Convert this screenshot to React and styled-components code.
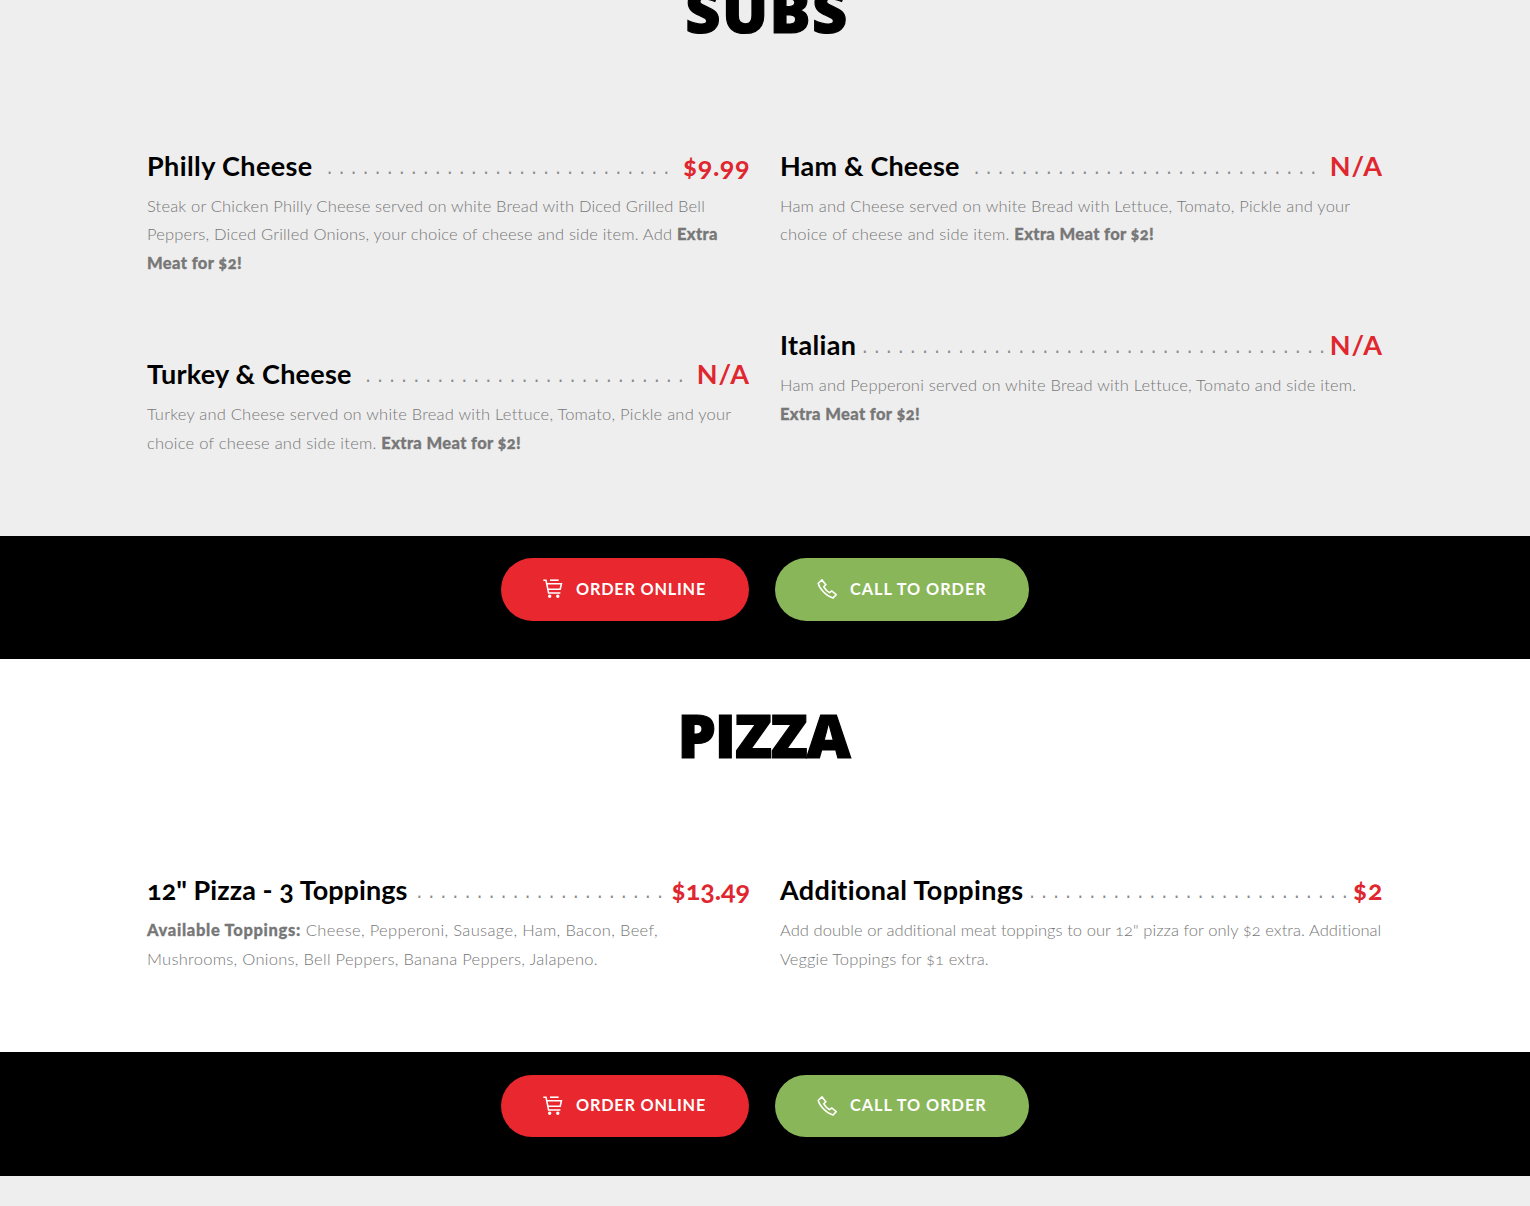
import React from 'react';
import styled, {createGlobalStyle} from "styled-components";


const GlobalStyle = createGlobalStyle`
  * {
    box-sizing: border-box;
  }
  body {
    margin: 0;
    background: #eeeeee;
    font-family: "Lato", "Open Sans", sans-serif;
    font-feature-settings: "onum";
    font-variant-ligatures: none;
  }
`;

const Page = styled.main`
  height: 1206px;
  overflow: hidden;
`;

const Section = styled.section`
  height: ${props => props.$height}px;
  margin-top: ${props => props.$offset || 0}px;
  background: ${props => props.$grey ? '#eeeeee' : '#ffffff'};
`;

const SectionTitle = styled.h2`
  margin: 0;
  padding-top: 35.6px;
  padding-left: ${props => props.$shift || 0}px;
  padding-right: 3px;
  height: 212px;
  text-align: center;
  font-family: "Open Sans", sans-serif;
  font-size: 61px;
  font-weight: 800;
  line-height: 80px;
  letter-spacing: ${props => props.$spacing}px;
  color: #000000;
  -webkit-text-stroke: 1.2px #000000;
`;

const Columns = styled.div`
  display: grid;
  grid-template-columns: 603px 603px;
  column-gap: 30px;
  justify-content: center;
`;

const Item = styled.article`
  margin-bottom: 77px;
`;

const ItemHead = styled.header`
  display: flex;
  height: 36px;
  margin-bottom: 9px;
  font-size: 27px;
  font-weight: 700;
  line-height: 37px;
  white-space: nowrap;
`;

const ItemName = styled.h3`
  margin: 0;
  font-size: inherit;
  letter-spacing: ${props => props.$spacing}px;
  color: #000000;
`;

const Dots = styled.span`
  flex: 1;
  display: flex;
  justify-content: center;
  padding-left: 3px;
  font-family: "Liberation Mono", monospace;
  font-size: 16px;
  font-weight: 400;
  line-height: 46px;
  letter-spacing: 2.43px;
  color: #8a8a8a;
`;

const Price = styled.span`
  letter-spacing: ${props => props.$spacing}px;
  color: #e0262f;
`;

const Description = styled.p`
  margin: 0 0 0.4px;
  font-size: 16.5px;
  font-weight: 300;
  line-height: 28.8px;
  color: #777777;
  white-space: nowrap;
`;

const Line = styled.span`
  display: block;
`;

const Text = styled.span`
  letter-spacing: ${props => props.$spacing}px;
`;

const Strong = styled.strong`
  font-weight: 900;
  letter-spacing: ${props => props.$spacing}px;
  -webkit-text-stroke: 0.3px #777777;
`;

const OrderBar = styled.div`
  display: flex;
  justify-content: center;
  gap: 26px;
  height: 123.4px;
  padding-top: 22.4px;
  background: #000000;
`;

const OrderButton = styled.a`
  display: flex;
  align-items: center;
  width: ${props => props.$width}px;
  height: 62.4px;
  padding: 0 0 0 42px;
  border-radius: 32px;
  background: ${props => props.$color};
  color: #ffffff;
  font-size: 16.3px;
  font-weight: 700;
  line-height: 20px;
  letter-spacing: ${props => props.$spacing}px;
  white-space: nowrap;
  cursor: pointer;
`;

const ButtonIcon = styled.svg`
  flex: none;
  width: 20px;
  height: 20px;
  margin-right: 13px;
  fill: none;
  stroke: #ffffff;
  stroke-width: 1.6;
`;

const ButtonLabel = styled.span`
  padding-bottom: 1px;
`;


const subsLeft = [
    {
        name: 'Philly Cheese', spacing: 0.39, dots: 29, price: '$9.99', priceSpacing: 0.5,
        lines: [
            [{text: 'Steak or Chicken Philly Cheese served on white Bread with Diced Grilled Bell', spacing: 0.174}],
            [{text: 'Peppers, Diced Grilled Onions, your choice of cheese and side item. Add ', spacing: 0.19},
                {text: 'Extra', spacing: 0.4, bold: true}],
            [{text: 'Meat for $2!', spacing: 0.39, bold: true}],
        ],
    },
    {
        name: 'Turkey & Cheese', spacing: 0.23, dots: 27, price: 'N/A', priceSpacing: 0.9,
        lines: [
            [{text: 'Turkey and Cheese served on white Bread with Lettuce, Tomato, Pickle and your', spacing: 0.227}],
            [{text: 'choice of cheese and side item. ', spacing: 0.245},
                {text: 'Extra Meat for $2!', spacing: 0.36, bold: true}],
        ],
    },
];

const subsRight = [
    {
        name: 'Ham & Cheese', spacing: 0.16, dots: 29, price: 'N/A', priceSpacing: 0.9,
        lines: [
            [{text: 'Ham and Cheese served on white Bread with Lettuce, Tomato, Pickle and your', spacing: 0.219}],
            [{text: 'choice of cheese and side item. ', spacing: 0.245},
                {text: 'Extra Meat for $2!', spacing: 0.36, bold: true}],
        ],
    },
    {
        name: 'Italian', spacing: 0.37, dots: 39, price: 'N/A', priceSpacing: 0.9,
        lines: [
            [{text: 'Ham and Pepperoni served on white Bread with Lettuce, Tomato and side item.', spacing: 0.22}],
            [{text: 'Extra Meat for $2!', spacing: 0.37, bold: true}],
        ],
    },
];

const pizzaLeft = [
    {
        name: '12" Pizza - 3 Toppings', spacing: 0.05, dots: 21, price: '$13.49', priceSpacing: -0.1,
        lines: [
            [{text: 'Available Toppings:', spacing: 0.68, bold: true},
                {text: ' Cheese, Pepperoni, Sausage, Ham, Bacon, Beef,', spacing: 0.34}],
            [{text: 'Mushrooms, Onions, Bell Peppers, Banana Peppers, Jalapeno.', spacing: 0.28}],
        ],
    },
];

const pizzaRight = [
    {
        name: 'Additional Toppings', spacing: 0.34, dots: 27, price: '$2', priceSpacing: 0.5,
        lines: [
            [{text: 'Add double or additional meat toppings to our 12" pizza for only $2 extra. Additional', spacing: 0.06}],
            [{text: 'Veggie Toppings for $1 extra.', spacing: 0.13}],
        ],
    },
];


function CartIcon() {
    return (
        <ButtonIcon viewBox="0 0 20 20">
            <path d="M0.3 1.2H3L5.6 14H17.4"/>
            <path d="M7 1.2H15.6"/>
            <path d="M3.8 4.8H18.4L17.2 10.2H4.9"/>
            <circle cx="6.7" cy="17.2" r="0.9" fill="#ffffff"/>
            <circle cx="14.8" cy="17.2" r="0.9" fill="#ffffff"/>
        </ButtonIcon>
    );
}

function PhoneIcon() {
    return (
        <ButtonIcon viewBox="0 0 20 20">
            <path d="M5 0.9L1.2 4.4C2.4 9.6 9.4 17.4 16 19L19.2 15.6L14.8 12L12.4 13.6C10.2 12.2 8.2 10.2 6.8 7.8L8.8 5.8Z"/>
        </ButtonIcon>
    );
}

function MenuItem({item}) {
    return (
        <Item>
            <ItemHead>
                <ItemName $spacing={item.spacing}>{item.name}</ItemName>
                <Dots>{'.'.repeat(item.dots)}</Dots>
                <Price $spacing={item.priceSpacing}>{item.price}</Price>
            </ItemHead>
            <Description>
                {item.lines.map((line, i) => (
                    <Line key={i}>
                        {line.map((part, j) => part.bold
                            ? <Strong key={j} $spacing={part.spacing}>{part.text}</Strong>
                            : <Text key={j} $spacing={part.spacing}>{part.text}</Text>)}
                    </Line>
                ))}
            </Description>
        </Item>
    );
}

function MenuColumns({left, right}) {
    return (
        <Columns>
            <div>{left.map((item) => <MenuItem key={item.name} item={item}/>)}</div>
            <div>{right.map((item) => <MenuItem key={item.name} item={item}/>)}</div>
        </Columns>
    );
}

function OrderButtons() {
    return (
        <OrderBar>
            <OrderButton $color="#e8272e" $width={248} $spacing={0.78}>
                <CartIcon/>
                <ButtonLabel>ORDER ONLINE</ButtonLabel>
            </OrderButton>
            <OrderButton $color="#8ab65a" $width={254} $spacing={0.95}>
                <PhoneIcon/>
                <ButtonLabel>CALL TO ORDER</ButtonLabel>
            </OrderButton>
        </OrderBar>
    );
}

export default function App() {
    return (
        <>
            <GlobalStyle/>
            <Page>
                <Section $grey $height={601.3} $offset={-65.5}>
                    <SectionTitle $spacing={1.4} $shift={7}>SUBS</SectionTitle>
                    <MenuColumns left={subsLeft} right={subsRight}/>
                </Section>
                <OrderButtons/>
                <Section $height={393.2}>
                    <SectionTitle $spacing={-1.3}>PIZZA</SectionTitle>
                    <MenuColumns left={pizzaLeft} right={pizzaRight}/>
                </Section>
                <OrderButtons/>
            </Page>
        </>
    );
}
